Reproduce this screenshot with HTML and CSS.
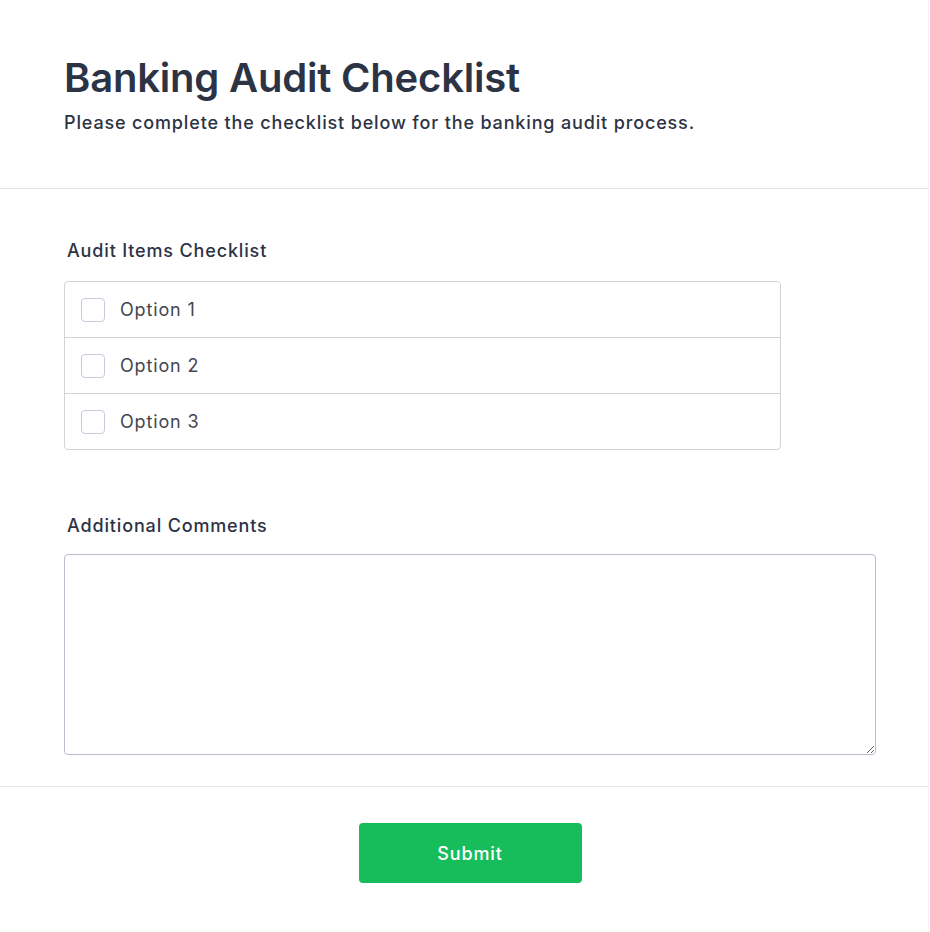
FILE: index.html
```html
<!DOCTYPE html>
<html lang="en">
<head>
    <meta charset="UTF-8">
    <meta name="viewport" content="width=device-width, initial-scale=1.0">
    <title>Banking Audit Checklist</title>
    <link rel="stylesheet" href="styles.css">
</head>
<body>

    <form class="form-card" id="auditForm">
        <div class="form-header">
            <h1>Banking Audit Checklist</h1>
            <p class="subtitle">Please complete the checklist below for the banking audit process.</p>
        </div>

        <div class="form-body">
            <div class="field">
                <label class="field-label">Audit Items Checklist</label>
                <div class="checklist">
                    <label class="check-row"><input type="checkbox" name="auditItems" value="1"><span>Option 1</span></label>
                    <label class="check-row"><input type="checkbox" name="auditItems" value="2"><span>Option 2</span></label>
                    <label class="check-row"><input type="checkbox" name="auditItems" value="3"><span>Option 3</span></label>
                </div>
            </div>

            <div class="field field-comments">
                <label class="field-label" for="comments">Additional Comments</label>
                <textarea id="comments" name="comments"></textarea>
            </div>
        </div>

        <div class="form-footer">
            <button type="submit" class="submit-btn">Submit</button>
        </div>
    </form>

</body>
</html>
```

FILE: styles.css
```css
body {
    font-family: Inter, "Noto Sans", sans-serif;
    letter-spacing: 0.85px;
    background-color: #fff;
    color: #2c3345;
    margin: 0;
    padding: 0;
}
.form-card {
    width: 929px;
    min-height: 932px;
    border-right: 1px solid #f1f2f6;
    box-sizing: border-box;
}
.form-header {
    padding: 54px 52px 52px 64px;
    border-bottom: 1px solid #e0e2ec;
}
h1 {
    font-size: 40px;
    font-weight: 600;
    line-height: 48px;
    letter-spacing: -0.2px;
    margin: 0 0 7px;
    color: #2c3345;
}
.subtitle {
    font-size: 18px;
    font-weight: 500;
    line-height: 27px;
    margin: 0;
}
.form-body {
    padding: 48px 52px 31px 64px;
    border-bottom: 1px solid #e8e9f0;
}
.field-label {
    display: block;
    padding-left: 3px;
    font-size: 18px;
    font-weight: 500;
    line-height: 27px;
    margin-bottom: 17px;
}
.checklist {
    width: 717px;
    box-sizing: border-box;
    border: 1px solid #d3d4d8;
    border-radius: 4px;
}
.check-row {
    display: flex;
    align-items: center;
    gap: 15px;
    height: 55px;
    padding-left: 16px;
    font-size: 18px;
    color: #45464d;
    cursor: pointer;
}
.check-row + .check-row {
    border-top: 1px solid #d3d4d8;
}
.check-row input {
    appearance: none;
    width: 24px;
    height: 24px;
    margin: 0;
    border: 1px solid #c8ccd8;
    border-radius: 4px;
    background: #fff;
}
.field-comments {
    margin-top: 62px;
}
.field-comments .field-label {
    margin-bottom: 15px;
}
textarea {
    display: block;
    width: 100%;
    height: 201px;
    box-sizing: border-box;
    border: 1px solid #babdcc;
    border-radius: 4px;
    font-family: inherit;
    font-size: 16px;
    padding: 10px;
}
.form-footer {
    padding: 36px 52px 50px 64px;
    display: flex;
    justify-content: center;
}
.submit-btn {
    width: 223px;
    height: 60px;
    border: none;
    border-radius: 4px;
    background-color: #18bd5b;
    color: #fff;
    font-family: inherit;
    font-size: 18px;
    font-weight: 500;
    letter-spacing: 0.85px;
    cursor: pointer;
}
```
